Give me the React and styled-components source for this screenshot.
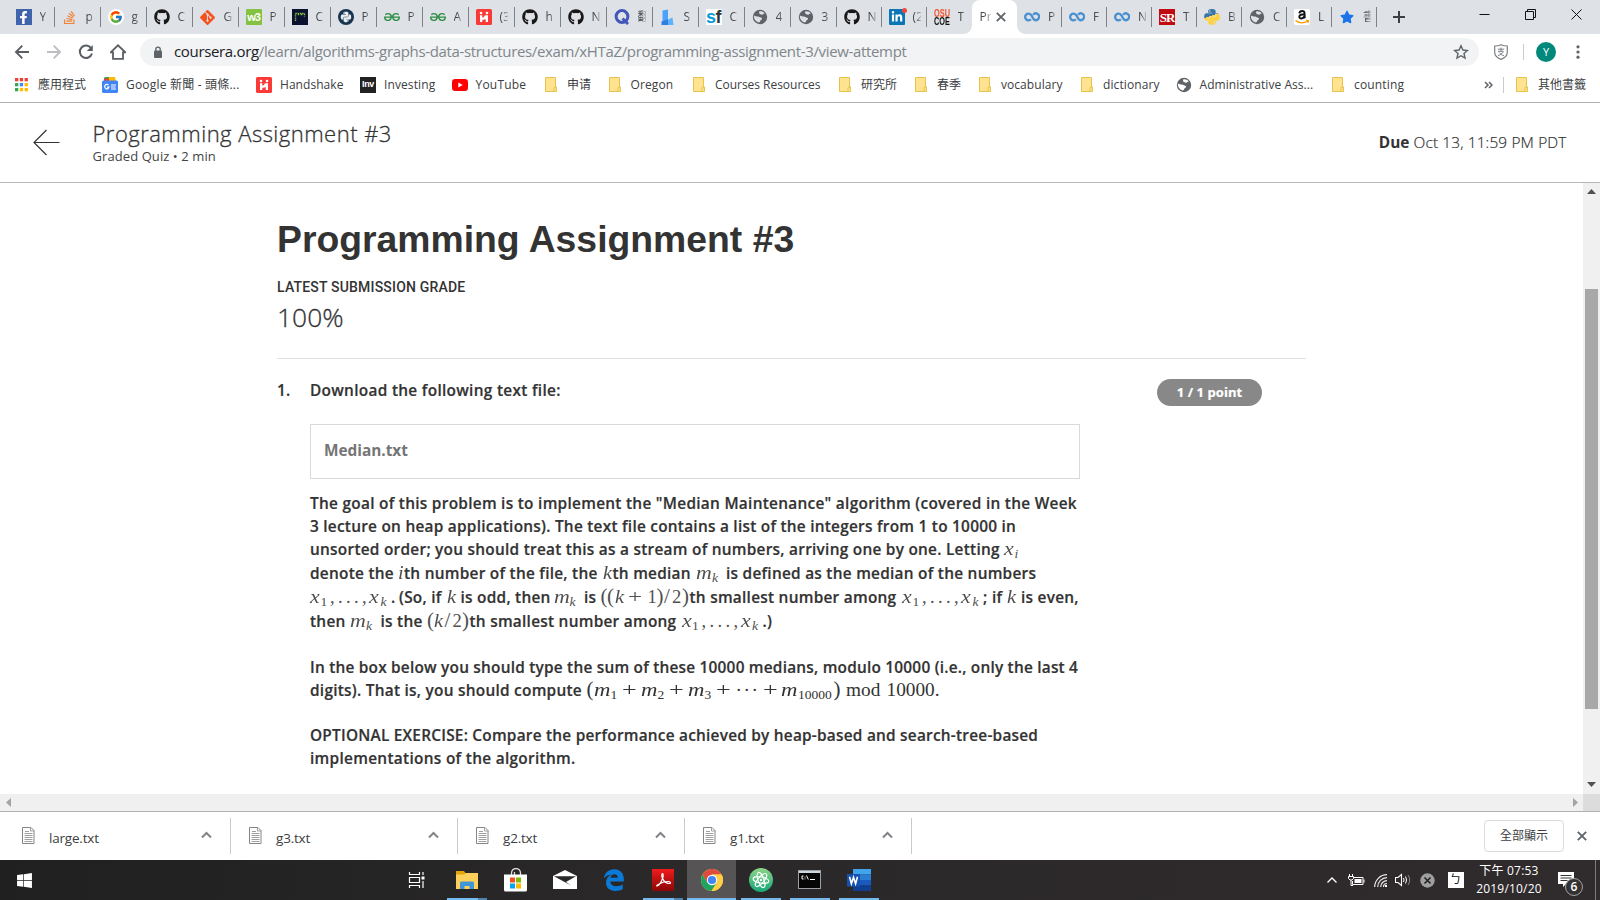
import React from "react";
import styled, { createGlobalStyle, css } from "styled-components";
import { FaGithub, FaGitAlt, FaStackOverflow, FaPython, FaWindows, FaFacebookF, FaStar, FaLinkedinIn } from "react-icons/fa";
import { FcGoogle } from "react-icons/fc";
import { SiGeeksforgeeks } from "react-icons/si";

const ui = `"Open Sans", "Noto Sans CJK TC", "Noto Sans CJK SC", sans-serif`;

const Global = createGlobalStyle`
  * { box-sizing: border-box; }
  html, body { margin: 0; padding: 0; }
  body { font-family: ${ui}; color: #333; background: #fff; overflow: hidden; }
  svg { display: block; flex: none; }
`;

const Screen = styled.div`
  width: 1600px;
  height: 900px;
  display: flex;
  flex-direction: column;
  overflow: hidden;
`;

/* ---------- tab strip ---------- */
const TabStrip = styled.div`
  height: 34px;
  flex: none;
  display: flex;
  align-items: stretch;
  background: #dee1e6;
  padding-left: 8.6px;
`;
const Tab = styled.div`
  width: ${(p) => p.$w}px;
  flex: none;
  display: flex;
  align-items: center;
  padding-left: 7px;
  gap: 8px;
  position: relative;
  ${(p) => p.$sep && css`
    &::after {
      content: "";
      position: absolute;
      right: 0;
      top: 7px;
      height: 20px;
      width: 1px;
      background: #808387;
    }
  `}
`;
const TabText = styled.span`
  width: ${(p) => p.$w || 8}px;
  overflow: hidden;
  white-space: nowrap;
  font-size: 12px;
  line-height: 20px;
  color: #45494d;
  -webkit-mask-image: linear-gradient(90deg, #000 40%, rgba(0, 0, 0, 0.25));
  mask-image: linear-gradient(90deg, #000 40%, rgba(0, 0, 0, 0.25));
`;
const ActiveTab = styled.div`
  width: 45.4px;
  flex: none;
  background: #fff;
  border-radius: 8px 8px 0 0;
  display: flex;
  align-items: center;
  padding-left: 8px;
  gap: 5px;
  position: relative;
  &::before, &::after {
    content: "";
    position: absolute;
    bottom: 0;
    width: 8px;
    height: 8px;
  }
  &::before { left: -8px; background: radial-gradient(circle at 0 0, transparent 7.5px, #fff 8px); }
  &::after { right: -8px; background: radial-gradient(circle at 100% 0, transparent 7.5px, #fff 8px); }
`;
const NewTab = styled.div`
  display: flex;
  align-items: center;
  padding-left: 15px;
`;
const WindowButtons = styled.div`
  margin-left: auto;
  display: flex;
  gap: 35px;
  padding: 9px 18px 0 0;
`;
const Fav = styled.span`
  width: 16px;
  height: 16px;
  flex: none;
  display: flex;
  align-items: center;
  justify-content: center;
  background: ${(p) => p.$bg || "transparent"};
  color: ${(p) => p.$fg || "#333"};
  border-radius: ${(p) => p.$r || 0}px;
  position: relative;
`;
const Letters = styled.b`
  font-family: ${(p) => p.$face || `"Liberation Sans", sans-serif`};
  font-size: ${(p) => p.$size}px;
  line-height: 1;
  letter-spacing: ${(p) => p.$ls || 0}px;
`;
const StackedLetters = styled.span`
  display: flex;
  flex-direction: column;
  align-items: center;
  font: 700 10.5px/8px "Liberation Sans", sans-serif;
  color: #111;
  width: 16px;
  transform: scaleX(0.7);
`;
const Orange = styled.span`color: #f0512a;`;
const Cyan = styled.span`color: #0b9bd8;`;
const RedDot = styled.i`
  position: absolute;
  right: -2px;
  top: -1px;
  width: 5px;
  height: 5px;
  border-radius: 50%;
  background: #f1453d;
`;

/* ---------- address bar ---------- */
const Toolbar = styled.div`
  height: 36px;
  flex: none;
  display: flex;
  align-items: center;
  padding: 0 17px 0 14px;
`;
const NavIcons = styled.div`
  display: flex;
  align-items: center;
  gap: 16px;
  width: 126px;
`;
const Omnibox = styled.div`
  width: 1339px;
  height: 28px;
  border-radius: 14px;
  background: #f1f3f4;
  display: flex;
  align-items: center;
  padding: 0 10px 0 13px;
`;
const Url = styled.div`
  margin: -2px 0 0 11px;
  flex: 1;
  font-size: 15px;
  letter-spacing: -0.34px;
  line-height: 20px;
  white-space: nowrap;
  color: #80868b;
`;
const Host = styled.span`color: #202124;`;
const ToolbarEnd = styled.div`
  display: flex;
  align-items: center;
  margin-left: 14px;
`;
const Rule = styled.div`
  width: 1px;
  height: 16px;
  background: #c8cacd;
  margin: 0 12px 0 ${(p) => p.$left}px;
`;
const Avatar = styled.div`
  width: 20px;
  height: 20px;
  border-radius: 50%;
  background: #00897b;
  color: #fff;
  font-size: 11px;
  line-height: 20px;
  text-align: center;
  margin-right: 20px;
`;

/* ---------- bookmarks ---------- */
const Bookmarks = styled.div`
  height: 33px;
  flex: none;
  display: flex;
  align-items: center;
  padding: 0 14px 3px;
  border-bottom: 1px solid #b1b2b3;
`;
const Bookmark = styled.div`
  width: ${(p) => (p.$w ? p.$w + "px" : "auto")};
  flex: none;
  display: flex;
  align-items: center;
  gap: ${(p) => p.$gap || 8}px;
  font-size: 12px;
  letter-spacing: ${(p) => p.$ls ?? -0.03}px;
  line-height: 18px;
  white-space: nowrap;
  color: #3c4043;
`;
const BookmarksEnd = styled.div`
  margin-left: auto;
  display: flex;
  align-items: center;
`;

/* ---------- page ---------- */
const PageHeader = styled.header`
  height: 80px;
  flex: none;
  border-bottom: 1px solid #b8b8b8;
  display: flex;
  align-items: center;
  padding: 0 33.5px 0 33px;
`;
const Titles = styled.div`
  margin-left: 32.5px;
  flex: 1;
`;
const Title = styled.div`
  font-size: 22px;
  font-weight: 300;
  letter-spacing: 0.48px;
  line-height: 24px;
  padding-bottom: 2px;
  -webkit-text-stroke: 0.3px #333;
`;
const Subtitle = styled.div`
  font-size: 13px;
  line-height: 18px;
  letter-spacing: 0.08px;
  color: #444;
`;
const Due = styled.div`
  font-size: 15.4px;
  line-height: 22px;
  font-weight: 300;
  letter-spacing: 0.14px;
  -webkit-text-stroke: 0.2px #333;
`;
const DueLabel = styled.span`
  font-weight: 700;
  letter-spacing: 0;
  -webkit-text-stroke: 0;
`;
const Viewport = styled.div`
  flex: none;
  height: 628px;
  display: grid;
  grid-template-columns: 1583px 17px;
  grid-template-rows: 611px 17px;
`;
const Content = styled.main`
  padding: 34px 0 0 277px;
  overflow: hidden;
`;
const Heading = styled.h1`
  margin: 0;
  font: 700 37.35px/44px "Liberation Sans", Arial, sans-serif;
`;
const GradeLabel = styled.div`
  margin-top: 16px;
  font: 500 14px/20px Roboto, sans-serif;
  letter-spacing: 0.19px;
`;
const Grade = styled.div`
  margin-top: 2px;
  font-size: 26.4px;
  line-height: 36px;
  font-weight: 300;
  -webkit-text-stroke: 0.3px #333;
`;
const Question = styled.section`
  width: 1029px;
  margin-top: 23px;
  border-top: 1px solid #e1e1e1;
  padding-top: 20px;
  display: flex;
  align-items: flex-start;
  font-size: 15.4px;
  font-weight: 600;
  letter-spacing: 0.26px;
  line-height: 23px;
`;
const Num = styled.div`
  width: 33px;
  -webkit-text-stroke: 0.2px #333;
`;
const Body = styled.div`width: 770px;`;
const FileBox = styled.div`
  margin: 22px 0 13px;
  height: 55px;
  border: 1px solid #d9d9d9;
  padding: 14px 13px;
  font-weight: 700;
  letter-spacing: -0.03px;
  color: #757575;
`;
const Line = styled.div`
  height: ${(p) => p.$h || 23}px;
  white-space: nowrap;
  letter-spacing: ${(p) => p.$ls ?? 0.26}px;
  -webkit-text-stroke: 0.2px #333;
`;
const Gap = styled.div`height: ${(p) => p.$h}px;`;
const Words = styled.span`
  display: inline-block;
  width: ${(p) => p.$w}px;
`;
const MathRun = styled.span`
  font-family: "Liberation Serif", "Times New Roman", serif;
  font-size: ${(p) => (p.$dark ? 19.3 : 18.5)}px;
  font-weight: 400;
  letter-spacing: 0;
  line-height: 0;
  color: ${(p) => (p.$dark ? "#333" : "#505050")};
  -webkit-text-stroke: 0;
`;
const Glyph = styled.span`
  display: inline-block;
  width: ${(p) => p.$w}px;
  font-style: ${(p) => (p.$it ? "italic" : "normal")};
  font-size: ${(p) => (p.$sub ? "13.5px" : p.$big ? "21px" : "1em")};
  vertical-align: ${(p) => (p.$sub ? -3 : 0)}px;
  transform: scaleX(${(p) => p.$sx || 1});
  transform-origin: 0 50%;
`;
const Points = styled.div`
  margin-left: 77px;
  width: 105px;
  height: 27px;
  border-radius: 14px;
  background: #888;
  color: #fff;
  font-size: 13px;
  font-weight: 700;
  letter-spacing: 0.08px;
  line-height: 27px;
  text-align: center;
  -webkit-text-stroke: 0.2px #fff;
`;

/* ---------- scroll bars ---------- */
const VBar = styled.div`
  background: #f0f0f0;
  display: flex;
  flex-direction: column;
  align-items: center;
  padding: 6px 0 7px;
`;
const VThumb = styled.div`
  width: 13px;
  height: 420px;
  margin-top: 95px;
  margin-bottom: auto;
  background: #a8a8a8;
`;
const HBar = styled.div`
  background: #f0f0f0;
  display: flex;
  align-items: center;
  justify-content: space-between;
  padding: 0 5.5px;
`;
const Corner = styled.div`background: #dcdcdc;`;

/* ---------- downloads ---------- */
const Downloads = styled.div`
  height: 49px;
  flex: none;
  border-top: 1px solid #b1b1b1;
  display: flex;
  align-items: center;
  padding: 0 13px 0 4px;
`;
const Download = styled.div`
  width: 227px;
  height: 36px;
  border-right: 1px solid #c9cacc;
  display: flex;
  align-items: center;
  padding: 0 18px 2px 17.5px;
`;
const FileName = styled.span`
  flex: 1;
  margin: 6px 0 0 14.5px;
  font-size: 13.5px;
  letter-spacing: -0.2px;
  line-height: 18px;
  color: #3c4043;
`;
const ShowAll = styled.div`
  margin-left: auto;
  margin-right: 13px;
  width: 80px;
  height: 32px;
  border: 1px solid #dadce0;
  border-radius: 4px;
  font-size: 12px;
  line-height: 29px;
  text-align: center;
  color: #3c4043;
`;

/* ---------- task bar ---------- */
const Taskbar = styled.div`
  height: 40px;
  flex: none;
  display: flex;
  background: linear-gradient(90deg, #202021, #2a2829 40%, #302b2d);
  color: #fff;
`;
const Start = styled.div`
  width: 390px;
  display: flex;
  align-items: center;
  padding-left: 16px;
`;
const TaskButton = styled.div`
  width: ${(p) => p.$w || 49}px;
  display: flex;
  align-items: center;
  justify-content: center;
  padding-bottom: 1px;
  position: relative;
  background: ${(p) => (p.$active ? "#565455" : "transparent")};
`;
const Running = styled.i`
  position: absolute;
  bottom: 0;
  left: ${(p) => (p.$wide ? 0 : 5)}px;
  right: ${(p) => (p.$wide ? 0 : 4)}px;
  height: 2px;
  background: ${(p) => (p.$multi ? "linear-gradient(90deg, #76b9ed 31px, #4f82ad 31px)" : "#76b9ed")};
`;
const Tray = styled.div`
  margin-left: auto;
  display: flex;
  align-items: center;
`;
const TrayItem = styled.div`
  width: ${(p) => p.$w}px;
  display: flex;
  justify-content: center;
`;
const Clock = styled.div`
  width: 80px;
  text-align: center;
  font-size: 12px;
  line-height: 18px;
  letter-spacing: 0.2px;
  padding-right: 4px;
`;
const Ime = styled.div`
  width: 16px;
  height: 16px;
  background: #fff;
  color: #111;
  font-size: 12px;
  line-height: 15px;
  text-align: center;
`;
const Notices = styled.div`
  width: 45px;
  height: 40px;
  padding: 12px 0 0 7px;
  position: relative;
  border-right: 1px solid #7d7b7c;
  margin-right: 4px;
`;
const Count = styled.div`
  position: absolute;
  left: 14px;
  top: 18px;
  width: 18px;
  height: 18px;
  border-radius: 50%;
  border: 1px solid #a5a3a4;
  background: #343133;
  font-size: 12px;
  font-weight: 600;
  line-height: 16px;
  text-align: center;
`;

/* ---------- icons ---------- */
const GlobeIcon = ({ land = "#dee1e6" }) => (
  <svg width="16" height="16" viewBox="0 0 16 16">
    <circle cx="8" cy="8" r="7.2" fill="#5f6368" />
    <path d="M2 6.500c1 .8 2.800.9 4.200 1.100.9.200 1.200.9 2.300 1 .9.100 1.700.5 1.500 1.300-.3.900-1.400.9-1.700 1.900-.2.900-.7 1.600-1.700 1.700C3.700 12.700 1.300 9.500 2 6.500zM7.500 2.200c2-.3 4.200.500 5.400 2.200-.7.200-1.200.1-1.600.7-.5.8-1.200 1-1.900.5-.5-.4-1.500-.2-1.900-.9-.5-.8-.7-1.800 0-2.500z" fill={land} />
  </svg>
);
const CourseraIcon = () => (
  <svg width="16" height="16" viewBox="0 0 16 16" fill="none" stroke="#4a90d0" strokeWidth="2.300">
    <path d="M6.900 10.200A3.300 3.300 0 1 1 6.900 5.800C8.300 6.800 8.600 9.300 9.900 10.500A3.300 3.300 0 1 0 9.200 5.700" />
  </svg>
);
const PythonIcon = () => (
  <>
    <svg width="0" height="0">
      <linearGradient id="py" x1="0" y1="0" x2="0.35" y2="1">
        <stop offset="0.52" stopColor="#3b76a9" />
        <stop offset="0.52" stopColor="#ffd140" />
      </linearGradient>
    </svg>
    <FaPython size={18} fill="url(#py)" />
  </>
);
const FolderIcon = () => (
  <svg width="12" height="15" viewBox="0 0 12 15">
    <path d="M.500.500h10v9.500h1v4.500H.500z" fill="#ffe391" stroke="#e6c34a" />
    <path d="M9 14.500V11q0-1 1-1h1.500" fill="none" stroke="#e6c34a" />
  </svg>
);
const AppsIcon = () => (
  <svg width="14" height="14" viewBox="0 0 14 14">
    {["#ea4335", "#ea4335", "#ea4335", "#34a853", "#4285f4", "#fbbc05", "#34a853", "#fbbc05", "#fbbc05"].map((c, i) => (
      <rect key={i} x={1 + (i % 3) * 4.800} y={Math.floor(i / 3) * 5} width="3.300" height="3.300" fill={c} />
    ))}
  </svg>
);
const NewsIcon = () => (
  <svg width="16" height="16" viewBox="0 0 16 16">
    <path d="M3 0h6l4 1v4H2V1z" fill="#34a853" />
    <path d="M7 0h6l1 5H6z" fill="#fbbc05" />
    <path d="M2 1.500h5v3H2z" fill="#ea4335" />
    <rect x="0" y="3.500" width="16" height="12.500" rx="1.500" fill="#4285f4" />
    <path d="M6.500 8.200A2.200 2.200 0 1 0 7 10.200H5" fill="none" stroke="#fff" strokeWidth="1.200" />
    <path d="M9 8h5M9 10h4.500M9 12h5" stroke="#fff" strokeWidth="1.100" />
  </svg>
);
const HandshakeIcon = () => (
  <svg width="16" height="16" viewBox="0 0 16 16">
    <rect width="16" height="16" rx="1.500" fill="#f93a36" />
    <circle cx="5" cy="4" r="1.300" fill="#fff" />
    <circle cx="11" cy="4" r="1.300" fill="#fff" />
    <path d="M4 6.200h2.300v2.300h.7c1 0 1.300-2.300 2.800-2.300H12V13H9.700v-3c-.9.100-1.100.700-2 .700H6.300V13H4z" fill="#fff" />
  </svg>
);
const YoutubeIcon = () => (
  <svg width="16" height="12" viewBox="0 0 16 12">
    <rect width="16" height="12" rx="3.200" fill="#f00" />
    <path d="M6.300 3.500v5L10.700 6z" fill="#fff" />
  </svg>
);
const TriPathIcon = () => (
  <svg width="16" height="16" viewBox="0 0 16 16">
    <rect width="16" height="16" fill="#0a1230" />
    <path d="M3.500 12V4.500M3.500 4.500h9M12.500 4.500v3M6.500 4.500v2.500M9.500 4.500v2.500" stroke="#8cbf3f" strokeWidth="1.400" strokeDasharray="1.400 .8" fill="none" />
  </svg>
);
const BlueBlocksIcon = () => (
  <svg width="14" height="16" viewBox="0 0 14 16">
    <path d="M1.500 1.500L7 .500V14l-5.500-2z" fill="#4aa3f8" />
    <path d="M.500 12.500l6-2 3 5.500H.500z" fill="#2f7fe0" />
    <path d="M7 10.500l4.500-2 1 7.500H7z" fill="#5db2ff" />
  </svg>
);
const AmazonIcon = () => (
  <svg width="16" height="16" viewBox="0 0 16 16" fill="none">
    <rect width="16" height="16" rx="2" fill="#fff" />
    <path d="M5.300 4.400C5.600 2.800 6.600 2 8 2c1.700 0 2.600.900 2.600 2.400v3.200c0 .700.200 1.100.700 1.600M10.300 5.300C7.200 5.200 5.300 5.900 5.300 7.700c0 2.500 3.900 2.400 5-.300" stroke="#111" strokeWidth="1.900" />
    <path d="M1.500 11.600c4 2.700 8.500 2.700 12 .500M12 11.300l2.400.2-.5 2.300" stroke="#f90" strokeWidth="1.300" />
  </svg>
);
const SpeechQIcon = () => (
  <svg width="16" height="16" viewBox="0 0 16 16" fill="none" stroke="#4257b8">
    <circle cx="8" cy="7.500" r="5.900" strokeWidth="3" />
    <path d="M8.500 9.500l5.500 5.500" strokeWidth="2.800" />
  </svg>
);
const ShieldIcon = () => (
  <svg width="16" height="16" viewBox="0 0 16 16" fill="none" stroke="#7d8085">
    <path d="M8 .700c2 1 4 1.300 6.300 1.300v6.500c0 3-2.600 5.300-6.300 6.900-3.700-1.600-6.300-3.900-6.300-6.900V2C4 2 6 1.700 8 .700z" strokeWidth="1.200" />
    <path d="M4.800 5.200h6.400M8 3.500v3.800M5 7.300h5.300c-.8 2-2.700 3.700-5.300 4.300M6.200 8.500c1 1.500 2.800 2.800 4.800 3.200" />
  </svg>
);
const DocIcon = () => (
  <svg width="13" height="17" viewBox="0 0 13 17" fill="none" stroke="#858585">
    <path d="M.500.500h8.500l3 3v13H.500z" />
    <path d="M8.500.500v3.500h4M3 4.500h4M2.500 6.500h8M2.500 8.500h8M2.500 10.500h8M2.500 12.500h8M2.500 14.500h8" stroke="#a0a0a0" />
  </svg>
);
const Chevron = ({ color = "#808387", w = 11, sw = 2 }) => (
  <svg width={w} height="8" viewBox="0 0 11 8" fill="none" stroke={color} strokeWidth={sw}>
    <path d="M1 6.500l4.500-4.500L10 6.500" />
  </svg>
);
const Cross = ({ size = 10, color = "#5f6368", sw = 1.800 }) => (
  <svg width={size} height={size} viewBox="0 0 10 10" stroke={color} strokeWidth={sw}>
    <path d="M.800.800l8.400 8.400M9.200.800L.800 9.200" />
  </svg>
);
const Arrow = ({ dir, color }) => (
  <svg width="16" height="16" viewBox="0 0 16 16" fill="none" stroke={color} strokeWidth="1.900">
    <path d={dir === "left" ? "M15 8H2.500M8.300 1.700L2 8l6.300 6.300" : "M1 8h12.500M7.700 1.700L14 8l-6.300 6.300"} />
  </svg>
);
const Triangle = ({ d, color, w = 9, h = 5 }) => (
  <svg width={w} height={h} viewBox={`0 0 ${w} ${h}`}><path d={d} fill={color} /></svg>
);

/* ---------- data ---------- */
const github = <FaGithub size={16} color="#191717" />;
const tabsBefore = [
  ["Y", <Fav $bg="#4064ac" $fg="#fff"><FaFacebookF size={13} /></Fav>],
  ["p", <Fav><FaStackOverflow size={15} color="#ef8236" /></Fav>],
  ["g", <Fav $bg="#fff" $r={8}><FcGoogle size={14} /></Fav>],
  ["C", <Fav>{github}</Fav>],
  ["G", <Fav><FaGitAlt size={17} color="#f4511e" /></Fav>],
  ["P", <Fav $bg="#84c341" $fg="#fff" $r={1}><Letters $size={11} $ls={-1}>w3</Letters></Fav>],
  ["C", <Fav><TriPathIcon /></Fav>],
  ["P", <Fav $bg="#18344f" $r={8}><FaPython size={12} color="#e8eef2" /></Fav>],
  ["P", <Fav><SiGeeksforgeeks size={16} color="#2f8d46" /></Fav>],
  ["A", <Fav><SiGeeksforgeeks size={16} color="#2f8d46" /></Fav>],
  ["(3", <Fav><HandshakeIcon /></Fav>],
  ["h", <Fav>{github}</Fav>],
  ["N", <Fav>{github}</Fav>],
  ["翻", <Fav><SpeechQIcon /></Fav>],
  ["S", <Fav><BlueBlocksIcon /></Fav>],
  ["C", <Fav $bg="#fff"><Letters $size={18} $ls={-0.5}><Cyan>s</Cyan>f</Letters></Fav>],
  ["4", <Fav><GlobeIcon /></Fav>],
  ["3", <Fav><GlobeIcon /></Fav>],
];
const tabsMiddle = [
  ["N", <Fav>{github}</Fav>],
  ["(2", <Fav $bg="#0a76b5" $fg="#fff" $r={1}><FaLinkedinIn size={12} /><RedDot /></Fav>],
  ["T", <Fav><StackedLetters><Orange>OSU</Orange><span>COE</span></StackedLetters></Fav>],
];
const tabsAfter = [
  ["P", <Fav><CourseraIcon /></Fav>],
  ["F", <Fav><CourseraIcon /></Fav>],
  ["N", <Fav><CourseraIcon /></Fav>],
  ["T", <Fav $bg="#c20a12" $fg="#fff"><Letters $face={`"Liberation Serif", serif`} $size={13} $ls={-1}>SR</Letters></Fav>],
  ["B", <Fav><PythonIcon /></Fav>],
  ["C", <Fav><GlobeIcon /></Fav>],
  ["L", <Fav><AmazonIcon /></Fav>],
  ["書", <Fav><FaStar size={14} color="#1a73e8" /></Fav>],
];
const bookmarks = [
  [88, "應用程式", <AppsIcon />, 10],
  [154, "Google 新聞 - 頭條...", <Fav><NewsIcon /></Fav>, 8, 0.2],
  [104, "Handshake", <Fav><HandshakeIcon /></Fav>, 8, 0.05],
  [91.5, "Investing", <Fav $bg="#222" $fg="#fff"><Letters $size={9} $ls={-0.3}>Inv</Letters></Fav>, 8, 0.1],
  [93, "YouTube", <YoutubeIcon />, 8, 0.2],
  [64, "申请", <FolderIcon />, 10.5],
  [84, "Oregon", <FolderIcon />, 10, 0.1],
  [146, "Courses Resources", <FolderIcon />, 10.5],
  [76, "研究所", <FolderIcon />, 10.5],
  [64, "春季", <FolderIcon />, 10.5],
  [102, "vocabulary", <FolderIcon />, 10.5, 0.05],
  [95, "dictionary", <FolderIcon />, 10.5, 0.1],
  [156, "Administrative Ass...", <Fav><GlobeIcon land="#fff" /></Fav>, 8, 0.05],
  [90, "counting", <FolderIcon />, 10.5, 0.15],
];

/* ---------- formula parts ---------- */
const Var = ({ c, w }) => <Glyph $it $w={w} $sx={c === "i" || c === "k" ? 1.1 : 1.18}>{c}</Glyph>;
const Sub = ({ c, w, it }) => <Glyph $sub $it={it} $w={w}>{c}</Glyph>;
const Sym = ({ c, w, big }) => <Glyph $w={w} $big={big} $sx={c === "+" ? 1.35 : 1}>{c}</Glyph>;
const Mk = () => <MathRun><Var c="m" w={16} /><Sub c="k" w={7.5} it /></MathRun>;
const XRange = () => (
  <MathRun>
    <Var c="x" w={10.500} /><Sub c="1" w={9.500} /><Sym c="," w={8} />
    <Sym c="." w={8} /><Sym c="." w={8} /><Sym c="." w={8} /><Sym c="," w={7} />
    <Var c="x" w={11.500} /><Sub c="k" w={10.500} it />
  </MathRun>
);

const renderTabs = (list, w, lastSep = true) =>
  list.map(([text, icon], i) => (
    <Tab key={i} $w={w} $sep={lastSep || i < list.length - 1}>
      {icon}
      <TabText>{text}</TabText>
    </Tab>
  ));

function Browser() {
  return (
    <>
      <TabStrip>
        {renderTabs(tabsBefore, 46)}
        {renderTabs(tabsMiddle, 45, false)}
        <ActiveTab>
          <TabText $w={11}>Pr</TabText>
          <Cross />
        </ActiveTab>
        {renderTabs(tabsAfter, 45)}
        <NewTab>
          <svg width="14" height="14" viewBox="0 0 14 14" stroke="#3c4043" strokeWidth="2"><path d="M7 1v12M1 7h12" /></svg>
        </NewTab>
        <WindowButtons>
          <svg width="11" height="11" viewBox="0 0 11 11" stroke="#111"><path d="M.500 5.500h10" /></svg>
          <svg width="11" height="11" viewBox="0 0 11 11" stroke="#111" fill="none"><path d="M.500 2.500h8v8h-8zM2.500 2.500v-2h8v8h-2" /></svg>
          <svg width="11" height="11" viewBox="0 0 11 11" stroke="#111"><path d="M.500.500l10 10M10.500.500l-10 10" /></svg>
        </WindowButtons>
      </TabStrip>
      <Toolbar>
        <NavIcons>
          <Arrow dir="left" color="#5a5e63" />
          <Arrow dir="right" color="#bcbec1" />
          <svg width="16" height="16" viewBox="0 0 16 16" fill="none" stroke="#5a5e63" strokeWidth="2">
            <path d="M13.200 4.200A6.200 6.200 0 1 0 14 9.500" />
            <path d="M14.800 1v6H8.800z" fill="#5a5e63" stroke="none" />
          </svg>
          <svg width="16" height="16" viewBox="0 0 16 16" fill="none" stroke="#5a5e63" strokeWidth="1.800">
            <path d="M.700 8.300L8 1.300l7.300 7H13v6.500H3V8.300z" />
          </svg>
        </NavIcons>
        <Omnibox>
          <svg width="10" height="13" viewBox="0 0 10 13">
            <rect x="1" y="4.500" width="8" height="7.500" rx="1" fill="#5f6368" />
            <path d="M2.800 5V3.300a2.200 2.200 0 0 1 4.400 0V5" fill="none" stroke="#5f6368" strokeWidth="1.300" />
          </svg>
          <Url><Host>coursera.org</Host>/learn/algorithms-graphs-data-structures/exam/xHTaZ/programming-assignment-3/view-attempt</Url>
          <svg width="16" height="16" viewBox="0 0 16 16" fill="none" stroke="#5f6368" strokeWidth="1.400">
            <path d="M8 1.800l1.900 4.200 4.500.500-3.400 3 1 4.500L8 11.700 4 14l1-4.500-3.400-3 4.500-.500z" />
          </svg>
        </Omnibox>
        <ToolbarEnd>
          <ShieldIcon />
          <Rule $left={14} />
          <Avatar>Y</Avatar>
          <svg width="4" height="14" viewBox="0 0 4 14" fill="#5f6368"><circle cx="2" cy="1.800" r="1.600" /><circle cx="2" cy="7" r="1.600" /><circle cx="2" cy="12.200" r="1.600" /></svg>
        </ToolbarEnd>
      </Toolbar>
      <Bookmarks>
        {bookmarks.map(([w, text, icon, gap, ls]) => (
          <Bookmark key={text} $w={w} $gap={gap} $ls={ls}>{icon}<span>{text}</span></Bookmark>
        ))}
        <BookmarksEnd>
          <svg width="9" height="8" viewBox="0 0 9 8" fill="none" stroke="#5f6368" strokeWidth="1.500"><path d="M1 1l3 3-3 3M5 1l3 3-3 3" /></svg>
          <Rule $left={10} />
          <Bookmark $gap={10}><FolderIcon />其他書籤</Bookmark>
        </BookmarksEnd>
      </Bookmarks>
    </>
  );
}

function Assignment() {
  return (
    <>
      <PageHeader>
        <svg width="27" height="27" viewBox="0 0 27 27" fill="none" stroke="#333" strokeWidth="1.200"><path d="M26.500 13.500H1M13.500 1L1 13.500 13.500 26" /></svg>
        <Titles>
          <Title>Programming Assignment #3</Title>
          <Subtitle>Graded Quiz • 2 min</Subtitle>
        </Titles>
        <Due><DueLabel>Due</DueLabel> Oct 13, 11:59 PM PDT</Due>
      </PageHeader>
      <Viewport>
        <Content>
          <Heading>Programming Assignment #3</Heading>
          <GradeLabel>LATEST SUBMISSION GRADE</GradeLabel>
          <Grade>100%</Grade>
          <Question>
            <Num>1.</Num>
            <Body>
              <Line $ls={0.3}>Download the following text file:</Line>
              <FileBox>Median.txt</FileBox>
              <Line $ls={0.28}>The goal of this problem is to implement the "Median Maintenance" algorithm (covered in the Week</Line>
              <Line $ls={0.25}>3 lecture on heap applications). The text file contains a list of the integers from 1 to 10000 in</Line>
              <Line $h={24}>
                <Words $w={694}>unsorted order; you should treat this as a stream of numbers, arriving one by one. Letting</Words>
                <MathRun><Var c="x" w={10.500} /><Sub c="i" w={6} it /></MathRun>
              </Line>
              <Line $h={24}>
                <Words $w={88}>denote the</Words><MathRun><Var c="i" w={6} /></MathRun>
                <Words $w={199}>th number of the file, the</Words><MathRun><Var c="k" w={9.500} /></MathRun>
                <Words $w={83.500}>th median</Words><Mk />
                <Words $w={6.500} />is defined as the median of the numbers
              </Line>
              <Line $h={24}>
                <XRange /><Words $w={8}>.</Words><Words $w={47.500}>(So, if</Words>
                <MathRun><Var c="k" w={14} /></MathRun><Words $w={93}>is odd, then</Words><Mk />
                <Words $w={7} /><Words $w={16.500}>is</Words>
                <MathRun>
                  <Sym c="(" w={6.500} big /><Sym c="(" w={7.500} big /><Var c="k" w={13} /><Sym c="+" w={20} />
                  <Sym c="1" w={9} /><Sym c=")" w={7.500} big /><Sym c="/" w={8} big /><Sym c="2" w={10} /><Sym c=")" w={7.500} big />
                </MathRun>
                <Words $w={212.500}>th smallest number among</Words><XRange /><Words $w={9}>;</Words><Words $w={14.500}>if</Words>
                <MathRun><Var c="k" w={14.500} /></MathRun>is even,
              </Line>
              <Line>
                <Words $w={40}>then</Words><Mk /><Words $w={7} /><Words $w={46.500}>is the</Words>
                <MathRun>
                  <Sym c="(" w={6.500} big /><Var c="k" w={11} /><Sym c="/" w={8} big /><Sym c="2" w={9.500} /><Sym c=")" w={7.500} big />
                </MathRun>
                <Words $w={212}>th smallest number among</Words><XRange />.)
              </Line>
              <Gap $h={23} />
              <Line $ls={0.22}>In the box below you should type the sum of these 10000 medians, modulo 10000 (i.e., only the last 4</Line>
              <Line>
                <Words $w={276.500}>digits). That is, you should compute</Words>
                <MathRun $dark>
                  <Sym c="(" w={7} big /><Var c="m" w={17} /><Sub c="1" w={11} /><Sym c="+" w={19} />
                  <Var c="m" w={17} /><Sub c="2" w={11} /><Sym c="+" w={19} />
                  <Var c="m" w={17} /><Sub c="3" w={11.500} /><Sym c="+" w={19.500} />
                  <Sym c="·" w={8} /><Sym c="·" w={8} /><Sym c="·" w={11} /><Sym c="+" w={18.500} />
                  <Var c="m" w={17} /><Sub c="10000" w={35.500} /><Sym c=")" w={12.500} big />
                  <Sym c="mod" w={40.500} /><Sym c="10000." w={52} />
                </MathRun>
              </Line>
              <Gap $h={22} />
              <Line $ls={0.23}>OPTIONAL EXERCISE: Compare the performance achieved by heap-based and search-tree-based</Line>
              <Line $ls={0.3}>implementations of the algorithm.</Line>
            </Body>
            <Points>1 / 1 point</Points>
          </Question>
        </Content>
        <VBar>
          <Triangle d="M4.500 0L9 5H0z" color="#505050" />
          <VThumb />
          <Triangle d="M0 0h9L4.500 5z" color="#505050" />
        </VBar>
        <HBar>
          <Triangle d="M5 0v9L0 4.500z" w={5} h={9} color="#a3a3a3" />
          <Triangle d="M0 0l5 4.500L0 9z" w={5} h={9} color="#a3a3a3" />
        </HBar>
        <Corner />
      </Viewport>
    </>
  );
}

function DownloadShelf() {
  return (
    <Downloads>
      {["large.txt", "g3.txt", "g2.txt", "g1.txt"].map((name) => (
        <Download key={name}><DocIcon /><FileName>{name}</FileName><Chevron /></Download>
      ))}
      <ShowAll>全部顯示</ShowAll>
      <Cross size={10} />
    </Downloads>
  );
}

function WindowsTaskbar() {
  return (
    <Taskbar>
      <Start><FaWindows size={17} color="#fff" /></Start>
      <TaskButton $w={52}>
        <svg width="17" height="16" viewBox="0 0 17 16" fill="none" stroke="#fff">
          <path d="M1.500 0v2.500h10V0M1.500 16v-2.500h10V16M1.500 5.500h10v5h-10zM15 0v3M15 9v7" strokeWidth="1.200" />
          <rect x="13.500" y="4.500" width="3" height="3" fill="#fff" stroke="none" />
        </svg>
      </TaskButton>
      <TaskButton>
        <svg width="22" height="18" viewBox="0 0 22 18">
          <path d="M0 0h8l1.500 2H22v16H0z" fill="#e5a50a" />
          <path d="M0 3.500h8L10 2h12v16H0z" fill="#fdd05c" />
          <path d="M4 18v-6q0-1.500 1.500-1.500h11q1.500 0 1.500 1.500v6h-4.500v-3h-5v3z" fill="#3f96d8" />
        </svg>
        <Running $multi />
      </TaskButton>
      <TaskButton>
        <svg width="23" height="24" viewBox="0 0 23 24">
          <path d="M7.500 7V5a4.500 4.500 0 0 1 9 0v2M10.500 7V4" fill="none" stroke="#ddd" strokeWidth="1.300" />
          <path d="M0 6.500h23V22q0 1.500-1.500 1.500h-20Q0 23.500 0 22z" fill="#fff" />
          <rect x="6" y="9.500" width="5" height="5" fill="#f25022" /><rect x="12" y="9.500" width="5" height="5" fill="#7fba00" />
          <rect x="6" y="15.500" width="5" height="5" fill="#00a4ef" /><rect x="12" y="15.500" width="5" height="5" fill="#ffb900" />
        </svg>
      </TaskButton>
      <TaskButton>
        <svg width="24" height="19" viewBox="0 0 24 19">
          <path d="M0 6L12 0l12 6v13H0z" fill="#fff" />
          <path d="M1 6.200h22L13 12l5 3.500z" fill="#2a2829" />
        </svg>
      </TaskButton>
      <TaskButton>
        <svg width="20" height="22" viewBox="0 0 20 22">
          <path d="M0 9.500C.600 4 4.500.300 10.200.300c6.300 0 9.600 4.400 9.600 9.600v2.700H6.300c.2 3.200 2.800 4.700 6.100 4.700 2.500 0 4.600-.7 6.300-1.700v4.700c-2 1.100-4.600 1.700-7.500 1.700C5.500 22 2 18.600 2 13.800c0-3.800 2-6.800 5.300-8.300C4.200 5.700 1.700 7.200 0 9.500zM6.400 8.800h7.400c0-2.200-1.200-3.600-3.400-3.600-2.100 0-3.600 1.500-4 3.600z" fill="#0a7ad8" />
        </svg>
      </TaskButton>
      <TaskButton>
        <svg width="22" height="22" viewBox="0 0 22 22">
          <defs><linearGradient id="pdf" x1="0" y1="0" x2="0" y2="1"><stop offset="0" stopColor="#ef1c1c" /><stop offset="1" stopColor="#8c0606" /></linearGradient></defs>
          <rect width="22" height="22" fill="url(#pdf)" />
          <path d="M5 17c2-.500 4.500-4.500 5.700-8 .6-2 .8-4.500-.200-4.500s-1 2.500 0 4.800c1.500 3.300 4 5.200 6.500 5.200s1.500-2-1-2-6 .9-8.500 2.200C5.500 15.900 4 17 5 17z" fill="none" stroke="#fff" strokeWidth="1.200" />
        </svg>
        <Running $multi />
      </TaskButton>
      <TaskButton $active>
        <svg width="22" height="22" viewBox="0 0 22 22">
          <circle cx="11" cy="11" r="11" fill="#ffce44" />
          <path d="M1.500 5.500A11 11 0 0 1 20.500 5.500H11L6.200 13.700z" fill="#dd4b3e" />
          <path d="M1.500 5.500A11 11 0 0 0 10.500 22L15.700 13.700H6.300z" fill="#1da462" />
          <path d="M10.500 22A11 11 0 0 0 20.500 5.500H11l4.800 8.200z" fill="#ffce44" />
          <circle cx="11" cy="11" r="5.200" fill="#fff" /><circle cx="11" cy="11" r="4.100" fill="#4285f4" />
        </svg>
        <Running $wide />
      </TaskButton>
      <TaskButton>
        <svg width="24" height="24" viewBox="0 0 24 24" fill="none" stroke="#fff" strokeWidth="1.100">
          <defs><linearGradient id="atom" x1="0" y1="0" x2="0" y2="1"><stop offset="0" stopColor="#8fd487" /><stop offset="1" stopColor="#14a877" /></linearGradient></defs>
          <circle cx="12" cy="12" r="12" fill="url(#atom)" stroke="none" />
          <ellipse cx="12" cy="12" rx="3" ry="8" transform="rotate(-20 12 12)" />
          <ellipse cx="12" cy="12" rx="3" ry="8" transform="rotate(40 12 12)" />
          <ellipse cx="12" cy="12" rx="3" ry="8" transform="rotate(100 12 12)" />
          <circle cx="12" cy="12" r="1.200" fill="#fff" stroke="none" />
        </svg>
        <Running />
      </TaskButton>
      <TaskButton>
        <svg width="23" height="19" viewBox="0 0 23 19">
          <rect x=".500" y=".500" width="22" height="18" fill="#060606" stroke="#9aa0a6" />
          <rect x="1" y="1" width="21" height="2" fill="#cfd8e0" />
          <path d="M5.500 6H4v3h1.500M7 6.700v.8M7 8.500v.8M8.500 5.500l1.800 4M12 9.500h5" stroke="#fff" fill="none" strokeWidth="1" />
        </svg>
        <Running />
      </TaskButton>
      <TaskButton>
        <svg width="24" height="22" viewBox="0 0 24 22">
          <rect x="6" y="0" width="18" height="5.500" fill="#41a5ee" /><rect x="6" y="5.500" width="18" height="5.500" fill="#2b7cd3" />
          <rect x="6" y="11" width="18" height="5.500" fill="#185abd" /><rect x="6" y="16.500" width="18" height="5.500" fill="#103f91" />
          <rect x="0" y="5" width="13" height="12.500" fill="#1650b0" />
          <path d="M2.500 7.800l1.900 7 2.100-6.500 2.100 6.500 1.900-7" fill="none" stroke="#fff" strokeWidth="1.600" />
        </svg>
        <Running />
      </TaskButton>
      <Tray>
        <TrayItem $w={24}><Chevron color="#fff" w={12} sw={1.300} /></TrayItem>
        <TrayItem $w={24}>
          <svg width="17" height="13" viewBox="0 0 17 13" fill="none" stroke="#fff">
            <path d="M5.500 3.500h9.500v7H4.500V7" /><rect x="6.500" y="5" width="7" height="4" fill="#fff" stroke="none" /><path d="M16 5.500v3M1.500 0v2.500M4.500 0v2.500M.500 2.500h5v2l-1.500 1.500H2L.500 4.500zM3 6v5.500h2" />
          </svg>
        </TrayItem>
        <TrayItem $w={25}>
          <svg width="13" height="13" viewBox="0 0 13 13" fill="none" stroke="#e8e8e8" strokeWidth="1.200">
            <path d="M.700 13A12.300 12.300 0 0 1 13 .700M3.700 13A9.300 9.300 0 0 1 13 3.700M6.700 13A6.300 6.300 0 0 1 13 6.700M9.500 13A3.500 3.500 0 0 1 13 9.500" /><rect x="11" y="11" width="2" height="2" fill="#fff" stroke="none" />
          </svg>
        </TrayItem>
        <TrayItem $w={21}>
          <svg width="17" height="14" viewBox="0 0 17 14" fill="none" stroke="#fff">
            <path d="M.500 4.500h2.500L6.500 1.500v11L3 9.500H.500z" strokeWidth="1.100" /><path d="M8.500 5q1 2 0 4M10.500 3.500q2.200 3.500 0 7" /><path d="M13 2q3.500 5 0 10" stroke="#8a8889" />
          </svg>
        </TrayItem>
        <TrayItem $w={26}>
          <svg width="15" height="15" viewBox="0 0 15 15"><circle cx="7.500" cy="7.500" r="7.200" fill="#a09f9f" /><path d="M4.500 4.500l6 6M10.500 4.500l-6 6" stroke="#222" strokeWidth="1.600" /></svg>
        </TrayItem>
        <TrayItem $w={31}><Ime>ㄅ</Ime></TrayItem>
        <Clock>下午 07:53<br />2019/10/20</Clock>
        <Notices>
          <svg width="16" height="16" viewBox="0 0 16 16"><path d="M0 0h16v12H8l-3 3v-3H0z" fill="#fff" /><path d="M2.500 3.500h11M2.500 6h11M2.500 8.500h7" stroke="#333" strokeWidth="1" /></svg>
          <Count>6</Count>
        </Notices>
      </Tray>
    </Taskbar>
  );
}

export default function App() {
  return (
    <Screen>
      <Global />
      <Browser />
      <Assignment />
      <DownloadShelf />
      <WindowsTaskbar />
    </Screen>
  );
}
